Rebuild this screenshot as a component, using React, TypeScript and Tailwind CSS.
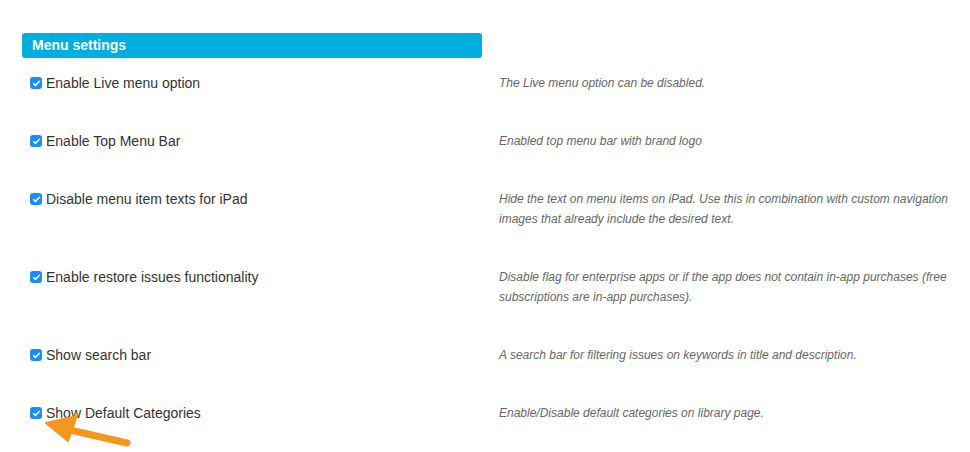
import { Check } from 'lucide-react';

interface Setting {
  label: string;
  description: string;
}

const settings: Setting[] = [
  { label: 'Enable Live menu option', description: 'The Live menu option can be disabled.' },
  { label: 'Enable Top Menu Bar', description: 'Enabled top menu bar with brand logo' },
  {
    label: 'Disable menu item texts for iPad',
    description:
      'Hide the text on menu items on iPad. Use this in combination with custom navigation images that already include the desired text.',
  },
  {
    label: 'Enable restore issues functionality',
    description:
      'Disable flag for enterprise apps or if the app does not contain in-app purchases (free subscriptions are in-app purchases).',
  },
  { label: 'Show search bar', description: 'A search bar for filtering issues on keywords in title and description.' },
  { label: 'Show Default Categories', description: 'Enable/Disable default categories on library page.' },
];

function Checkbox() {
  return (
    <span className="flex items-center justify-center w-[12px] h-[12px] rounded-[3px] bg-[#1b8df5] mr-[4px] shrink-0">
      <Check className="w-[9px] h-[9px] text-white" strokeWidth={4} />
    </span>
  );
}

export default function App() {
  return (
    <div className="relative w-[970px] h-[452px] bg-white overflow-hidden font-['Liberation_Sans',Arial,sans-serif]">
      <div className="pt-[33px] pl-[22px]">
        <div className="w-[460px] h-[25px] rounded-[3px] bg-[#00aee0] flex items-center pl-[10px]">
          <span className="text-white font-bold text-[14px]">Menu settings</span>
        </div>

        <div className="mt-[15px]">
          {settings.map((setting) => (
            <div key={setting.label} className="flex pb-[38px]">
              <label className="w-[477px] flex items-center h-[20px] pl-[8px] text-[14px] text-[#333333] leading-[20px]">
                <Checkbox />
                {setting.label}
              </label>
              <p className="w-[462px] text-[12px] leading-[20px] italic text-[#666666]">
                {setting.description}
              </p>
            </div>
          ))}
        </div>
      </div>

      <svg className="absolute left-0 top-0" width="970" height="452" viewBox="0 0 970 452">
        <line x1="127" y1="443" x2="70" y2="430" stroke="#f5961e" strokeWidth="7" strokeLinecap="round" />
        <polygon points="46,423 77,416 68,441" fill="#f5961e" stroke="#f5961e" strokeWidth="2" strokeLinejoin="round" />
      </svg>
    </div>
  );
}
